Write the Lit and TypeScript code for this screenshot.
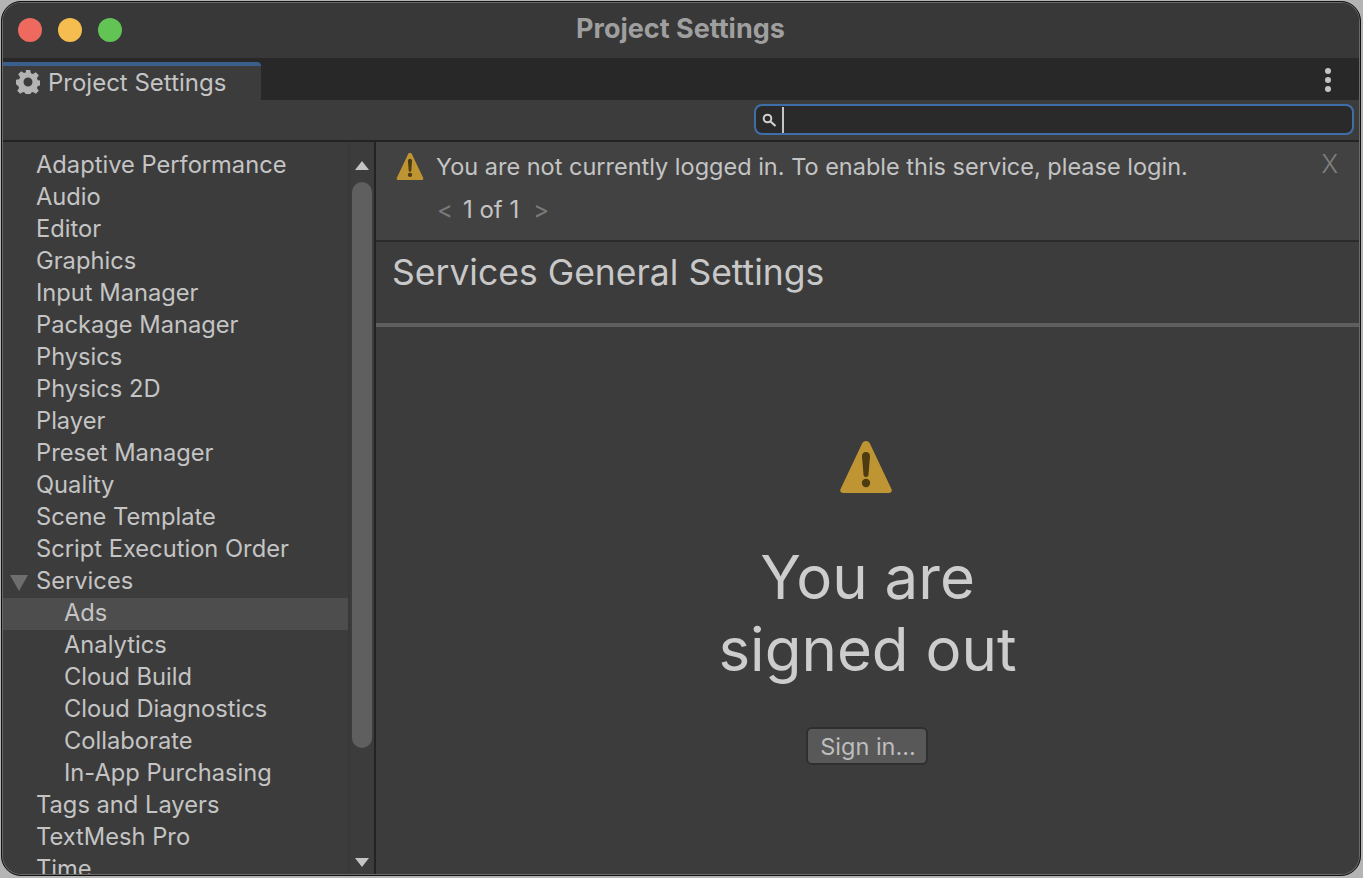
import { LitElement, html, css, svg } from 'lit';
import { customElement } from 'lit/decorators.js';

type Row = { label: string; child?: boolean; open?: boolean; selected?: boolean };

const rows: Row[] = [
  { label: 'Adaptive Performance' },
  { label: 'Audio' },
  { label: 'Editor' },
  { label: 'Graphics' },
  { label: 'Input Manager' },
  { label: 'Package Manager' },
  { label: 'Physics' },
  { label: 'Physics 2D' },
  { label: 'Player' },
  { label: 'Preset Manager' },
  { label: 'Quality' },
  { label: 'Scene Template' },
  { label: 'Script Execution Order' },
  { label: 'Services', open: true },
  { label: 'Ads', child: true, selected: true },
  { label: 'Analytics', child: true },
  { label: 'Cloud Build', child: true },
  { label: 'Cloud Diagnostics', child: true },
  { label: 'Collaborate', child: true },
  { label: 'In-App Purchasing', child: true },
  { label: 'Tags and Layers' },
  { label: 'TextMesh Pro' },
  { label: 'Time' },
];

const warning = svg`<path d="M26 0c1.8 0 3.100.9 4 2.700l21.300 45c1.200 2.400.1 4.300-2.500 4.300H3.200C.6 52-.5 50.100.7 47.700L22 2.700C22.900.9 24.200 0 26 0z" fill="#bf9534"/><path d="M22 15.500c-.2-2.700 1.400-4.500 4-4.500s4.200 1.800 4 4.500l-1.500 18c-.1 1.800-1.100 2.500-2.500 2.500s-2.400-.7-2.500-2.500z" fill="#4d3c12"/><circle cx="26" cy="42" r="4.200" fill="#4d3c12"/>`;

const gear = svg`<path fill-rule="evenodd" d="M9.800 0h4.400l.7 3.300 2 .8L19.800 2.300l3 3-1.900 2.900.9 2 3.200.6v4.400l-3.200.7-.9 2 1.900 2.800-3 3.100-2.900-1.900-2 .8-.7 3.300H9.800l-.7-3.300-2-.8-2.900 1.900-3-3.100 1.900-2.800-.9-2L0 14.200V9.800l3.200-.6.900-2-1.900-2.900 3-3 2.900 1.800 2-.8zM12 7.500a4.500 4.500 0 1 0 0 9 4.500 4.500 0 0 0 0-9z" fill="#b4b4b4"/>`;

@customElement('app-root')
export class AppRoot extends LitElement {
  static styles = css`
    :host {
      display: block;
      width: 1363px;
      height: 878px;
      background: #b4b4b4;
      font-family: Inter, 'Noto Sans', sans-serif;
      color: #c8c8c8;
      overflow: hidden;
    }
    .window {
      box-sizing: border-box;
      width: 1360px;
      height: 875px;
      margin: 1px 0 0 1px;
      padding: 1px;
      border: 1px solid #111;
      box-shadow: inset 0 0 0 1px #6a6a6a;
      border-radius: 20px;
      display: flex;
      flex-direction: column;
      background: #3c3c3c;
    }
    .inner {
      flex: 1;
      min-height: 0;
      display: flex;
      flex-direction: column;
      border-radius: 18px;
      overflow: hidden;
    }
    .titlebar {
      flex: none;
      height: 55px;
      background: #383838;
      display: flex;
      align-items: center;
      position: relative;
    }
    .lights {
      display: flex;
      gap: 16px;
      padding-left: 15px;
      margin-top: -1px;
    }
    .lights i {
      width: 24px;
      height: 24px;
      border-radius: 50%;
    }
    .red { background: #ee6a5f; }
    .yellow { background: #f5bd4f; }
    .green { background: #61c454; }
    .title {
      position: absolute;
      left: 0;
      right: 0;
      top: 10px;
      text-align: center;
      padding-right: 1px;
      font-size: 27px;
      line-height: 32px;
      font-weight: 700;
      color: #9f9f9f;
    }
    .tabbar {
      flex: none;
      height: 42px;
      background: #282828;
      display: flex;
      justify-content: space-between;
    }
    .tab {
      box-sizing: border-box;
      width: 258px;
      height: 38px;
      margin-top: 4px;
      background: #3c3c3c;
      border-top: 4px solid #3a5f8c;
      border-top-right-radius: 4px;
      display: flex;
      align-items: center;
      gap: 8px;
      padding: 0 0 2px 13px;
      font-size: 24px;
      color: #c4c4c4;
    }
    .tab svg { width: 24px; height: 24px; flex: none; }
    .more {
      display: flex;
      flex-direction: column;
      gap: 3px;
      padding: 10px 28px 0 0;
    }
    .more i {
      width: 6px;
      height: 6px;
      border-radius: 50%;
      background: #c4c4c4;
    }
    .toolbar {
      flex: none;
      box-sizing: border-box;
      height: 42px;
      background: #3c3c3c;
      border-bottom: 2px solid #232323;
      display: flex;
      justify-content: flex-end;
      padding: 4px 5px 0 0;
    }
    .search {
      box-sizing: border-box;
      width: 600px;
      height: 31px;
      background: #2a2a2a;
      border: 2px solid #3f6fa8;
      border-radius: 8px;
      display: flex;
      align-items: center;
      padding-left: 5px;
    }
    .search svg { width: 16px; height: 16px; flex: none; }
    .caret {
      width: 2px;
      height: 26px;
      margin-left: 5px;
      background: #c4c4c4;
    }
    .body {
      flex: 1;
      min-height: 0;
      display: flex;
    }
    .sidebar {
      flex: none;
      width: 345px;
      padding-top: 8px;
      overflow: hidden;
      box-sizing: border-box;
    }
    .row {
      height: 32px;
      line-height: 30px;
      font-size: 23.7px;
      color: #c4c4c4;
      padding-left: 33px;
      white-space: nowrap;
      position: relative;
    }
    .row.child { padding-left: 61px; }
    .row.selected { background: #4d4d4d; }
    .row.open::before {
      content: '';
      position: absolute;
      left: 7px;
      top: 9px;
      border-left: 9px solid transparent;
      border-right: 9px solid transparent;
      border-top: 16px solid #6e6e6e;
    }
    .scroll {
      flex: none;
      width: 26px;
      box-sizing: border-box;
      border-left: 2px solid #383838;
      display: flex;
      flex-direction: column;
      align-items: center;
      background: #3c3c3c;
      padding-top: 19px;
    }
    .arrow {
      width: 0;
      height: 0;
      flex: none;
      border-left: 7px solid transparent;
      border-right: 7px solid transparent;
    }
    .arrow.up { border-bottom: 9px solid #c4c4c4; }
    .arrow.down { border-top: 9px solid #c4c4c4; margin-top: 110px; }
    .thumb {
      flex: none;
      width: 20px;
      height: 566px;
      margin-top: 12px;
      border-radius: 10px;
      background: #5f5f5f;
    }
    .main {
      flex: 1;
      min-width: 0;
      border-left: 2px solid #232323;
      display: flex;
      flex-direction: column;
    }
    .notice {
      flex: none;
      box-sizing: border-box;
      height: 100px;
      background: #424242;
      border-bottom: 2px solid #2b2b2b;
      padding: 8px 0 0 20px;
      position: relative;
    }
    .notice-line {
      display: flex;
      align-items: center;
      gap: 12px;
      height: 32px;
      font-size: 23.5px;
      color: #c4c4c4;
    }
    .notice-line svg { width: 28px; height: 27px; flex: none; margin-top: 1px; }
    .close {
      position: absolute;
      top: 6px;
      right: 21px;
      font-size: 25px;
      line-height: 32px;
      color: #808080;
      font-weight: 300;
    }
    .pager {
      display: flex;
      align-items: center;
      height: 32px;
      margin: 11px 0 0 41px;
      font-size: 24px;
      gap: 10px;
      color: #c4c4c4;
    }
    .pager span.dim { color: #7b7b7b; }
    .pager span.next { margin-left: 4px; }
    .heading {
      flex: none;
      box-sizing: border-box;
      height: 85px;
      border-bottom: 4px solid #5f5f5f;
      padding: 9px 0 0 16px;
      font-size: 35.5px;
      line-height: 44px;
      color: #c8c8c8;
    }
    .signed {
      flex: 1;
      display: flex;
      flex-direction: column;
      align-items: center;
      padding-top: 114px;
    }
    .signed svg { width: 52px; height: 52px; flex: none; margin-left: -3px; }
    .big {
      margin-top: 48px;
      font-size: 60px;
      line-height: 72px;
      font-weight: 400;
      text-align: center;
      color: #cdcdcd;
    }
    .signin {
      box-sizing: border-box;
      margin: 42px 0 0 -2px;
      width: 122px;
      height: 38px;
      background: #585858;
      border: 2px solid #2f2f2f;
      border-radius: 6px;
      font: 400 23.5px Inter, 'Noto Sans', sans-serif;
      color: #bdbdbd;
      padding: 0 0 0 3px;
    }
  `;

  render() {
    return html`
      <div class="window">
        <div class="inner">
          <div class="titlebar">
            <div class="lights">
              <i class="red"></i><i class="yellow"></i><i class="green"></i>
            </div>
            <div class="title">Project Settings</div>
          </div>
          <div class="tabbar">
            <div class="tab">
              <svg viewBox="0 0 24 24">${gear}</svg>
              Project Settings
            </div>
            <div class="more"><i></i><i></i><i></i></div>
          </div>
          <div class="toolbar">
            <div class="search">
              <svg viewBox="0 0 16 16">
                <circle cx="6.500" cy="6.500" r="3.800" fill="none" stroke="#d0d0d0" stroke-width="2" />
                <path d="M9.500 9.500l5 4.500" stroke="#d0d0d0" stroke-width="2.200" fill="none" />
              </svg>
              <div class="caret"></div>
            </div>
          </div>
          <div class="body">
            <div class="sidebar">
              ${rows.map(
                (r) => html`<div
                  class="row ${r.child ? 'child' : ''} ${r.open ? 'open' : ''} ${r.selected ? 'selected' : ''}"
                >
                  ${r.label}
                </div>`
              )}
            </div>
            <div class="scroll">
              <div class="arrow up"></div>
              <div class="thumb"></div>
              <div class="arrow down"></div>
            </div>
            <div class="main">
              <div class="notice">
                <div class="notice-line">
                  <svg viewBox="0 0 52 52">${warning}</svg>
                  You are not currently logged in. To enable this service, please login.
                </div>
                <div class="close">X</div>
                <div class="pager">
                  <span class="dim">&lt;</span><span>1 of 1</span><span class="dim next">&gt;</span>
                </div>
              </div>
              <div class="heading">Services General Settings</div>
              <div class="signed">
                <svg viewBox="0 0 52 52">${warning}</svg>
                <div class="big">You are<br />signed out</div>
                <button class="signin">Sign in...</button>
              </div>
            </div>
          </div>
        </div>
      </div>
    `;
  }
}
